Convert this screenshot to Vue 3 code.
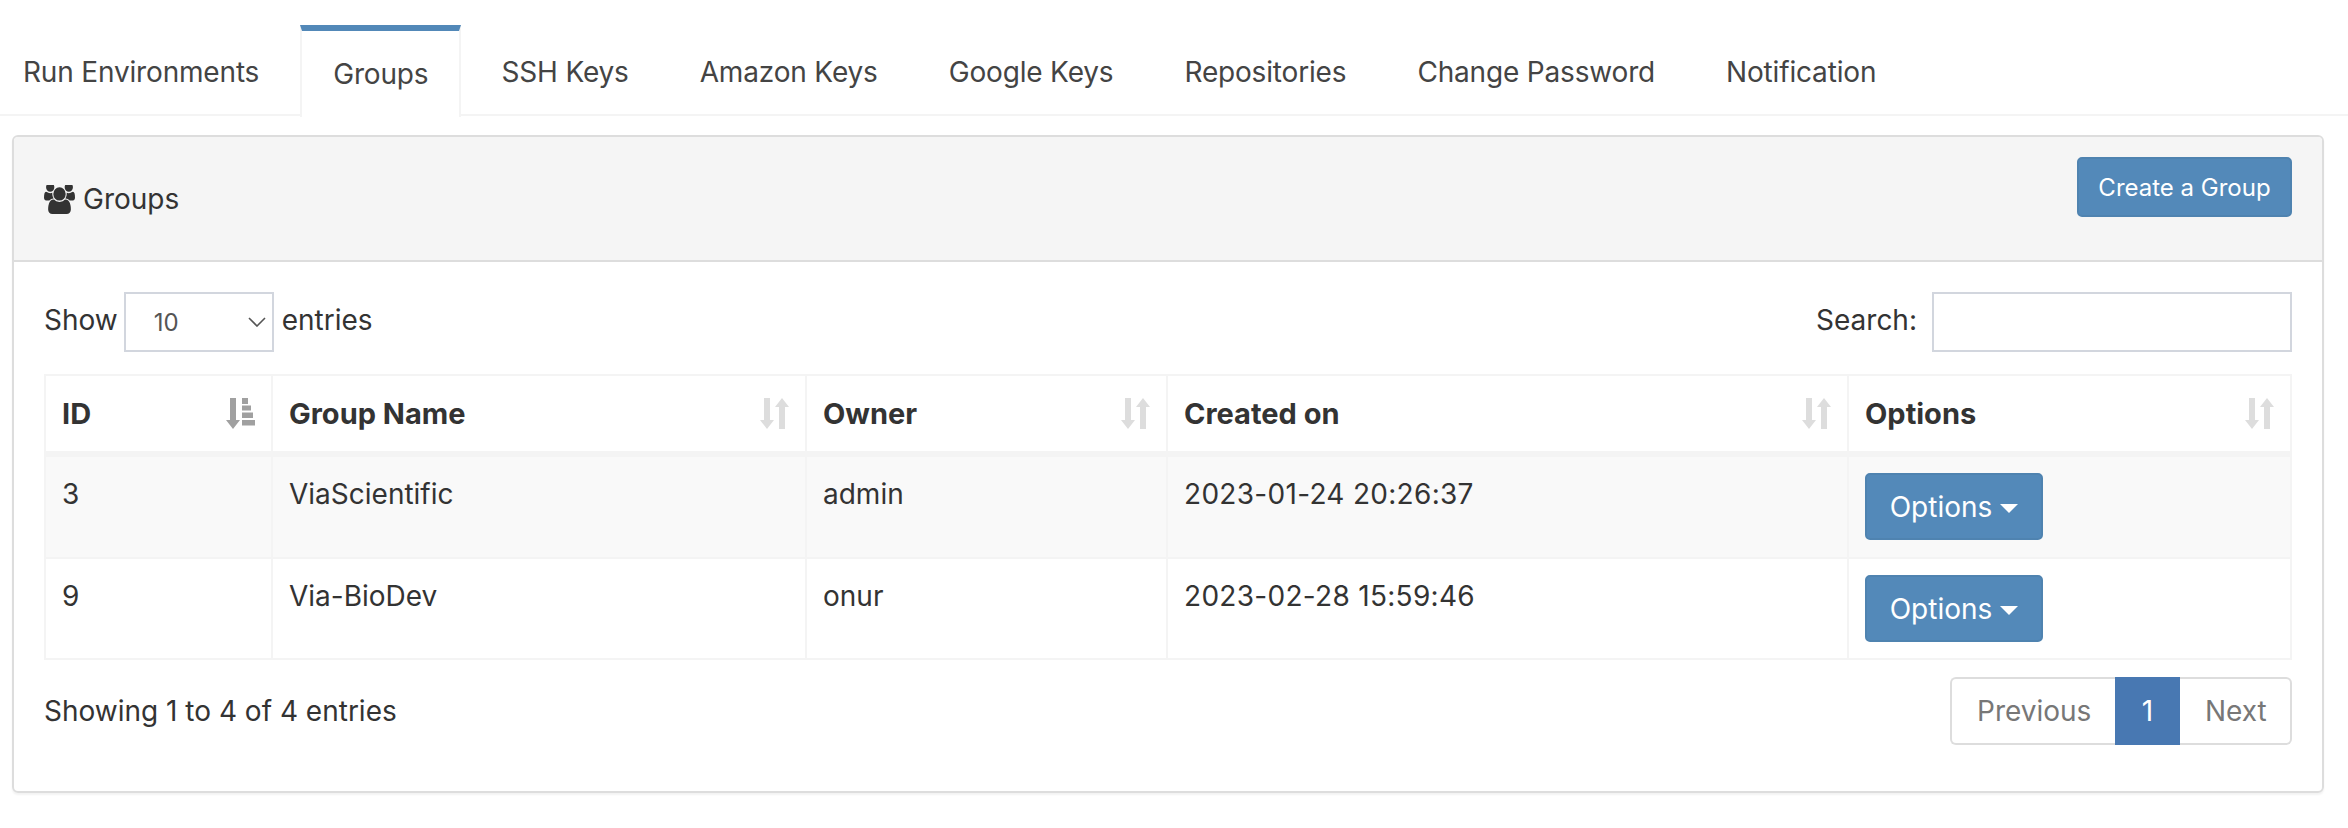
<template>
  <div class="page">
    <ul class="tabs">
      <li v-for="tab in tabs" :key="tab" class="tab" :class="{ active: tab === 'Groups' }">{{ tab }}</li>
    </ul>

    <section class="panel">
      <header class="panel-heading">
        <h3 class="panel-title">
          <svg class="users-icon" viewBox="0 128 1920 1664" preserveAspectRatio="none">
            <path fill="currentColor" d="M593 896q-162 5-265 128h-134q-82 0-138-40.500t-56-118.500q0-353 124-353 6 0 43.500 21t97.500 42.500 119 21.500q67 0 133-23-5 37-5 66 0 139 81 256zm1071 637q0 120-73 189.500t-194 69.500h-874q-121 0-194-69.500t-73-189.500q0-53 3.500-103.500t14-109 26.500-108.500 43-97.500 62-81 85.500-53.500 111.500-20q10 0 43 21.500t73 48 107 48 135 21.500 135-21.500 107-48 73-48 43-21.500q61 0 111.500 20t85.500 53.500 62 81 43 97.500 26.500 108.500 14 109 3.500 103.500zm-1024-1277q0 106-75 181t-181 75-181-75-75-181 75-181 181-75 181 75 75 181zm704 384q0 159-112.500 271.500t-271.500 112.500-271.500-112.500-112.500-271.500 112.500-271.500 271.500-112.500 271.500 112.500 112.500 271.500zm576 225q0 78-56 118.500t-138 40.500h-134q-103-123-265-128 81-117 81-256 0-29-5-66 66 23 133 23 59 0 119-21.500t97.500-42.500 43.500-21q124 0 124 353zm-128-609q0 106-75 181t-181 75-181-75-75-181 75-181 181-75 181 75 75 181z" />
          </svg>
          <span>Groups</span>
        </h3>
        <button class="btn create-btn">Create a Group</button>
      </header>

      <div class="panel-body">
        <div class="table-controls">
          <label class="length">
            Show
            <span class="select-wrap">
              <select class="length-select">
                <option>10</option>
              </select>
              <svg class="chevron" viewBox="0 0 18 10"><path d="M1 1l8 8 8-8" fill="none" stroke="#555" stroke-width="1.6" /></svg>
            </span>
            entries
          </label>
          <label class="search">
            Search:
            <input class="search-input" type="text" />
          </label>
        </div>

        <table class="groups-table">
          <thead>
            <tr>
              <th v-for="(col, i) in columns" :key="col">
                <div class="th-inner">
                  <span>{{ col }}</span>
                  <svg v-if="i === 0" class="sort-icon sorted" viewBox="0 0 29 31">
                    <path fill="currentColor" d="M4 0h6v22h4l-7 9-7-9h4zM16 0h6v6h-6zM16 7.500h9v5h-9zM16 14.500h11v5.500h-11zM16 22h13v5.500h-13z" />
                  </svg>
                  <svg v-else class="sort-icon" viewBox="0 0 29 31">
                    <path fill="currentColor" d="M4 0h6v22h4l-7 9-7-9h4zM22 0l7 9h-4v22h-6v-22h-4z" />
                  </svg>
                </div>
              </th>
            </tr>
          </thead>
          <tbody>
            <tr v-for="row in rows" :key="row.id">
              <td>{{ row.id }}</td>
              <td>{{ row.name }}</td>
              <td>{{ row.owner }}</td>
              <td class="date-cell">{{ row.created }}</td>
              <td>
                <button class="btn options-btn">Options<span class="caret"></span></button>
              </td>
            </tr>
          </tbody>
        </table>

        <div class="table-footer">
          <div class="info">Showing 1 to 4 of 4 entries</div>
          <ul class="pagination">
            <li class="page-item">Previous</li>
            <li class="page-item current">1</li>
            <li class="page-item">Next</li>
          </ul>
        </div>
      </div>
    </section>
  </div>
</template>

<script setup>
const tabs = ['Run Environments', 'Groups', 'SSH Keys', 'Amazon Keys', 'Google Keys', 'Repositories', 'Change Password', 'Notification']
const columns = ['ID', 'Group Name', 'Owner', 'Created on', 'Options']
const rows = [
  { id: 3, name: 'ViaScientific', owner: 'admin', created: '2023-01-24 20:26:37' },
  { id: 9, name: 'Via-BioDev', owner: 'onur', created: '2023-02-28 15:59:46' }
]
</script>

<style>
body {
  background: #fff;
}
</style>

<style scoped>
.page {
  font-family: Inter, "Liberation Sans", sans-serif;
  font-size: 28px;
  color: #333;
  width: 2348px;
  height: 828px;
  overflow: hidden;
  box-sizing: border-box;
  padding-top: 25px;
}

.tabs {
  list-style: none;
  margin: 0;
  padding: 0;
  height: 89px;
  display: flex;
  gap: 9px;
  border-bottom: 2px solid #f4f4f4;
}

.tab {
  padding: 0 31px;
  line-height: 94px;
  color: #444;
  letter-spacing: -0.17px;
}
.tab:first-child {
  padding-left: 23px;
  padding-right: 32px;
}
.tab.active {
  height: 86px;
  background: #fff;
  border-top: 6px solid #5288b8;
  border-left: 2px solid #f4f4f4;
  border-right: 2px solid #f4f4f4;
  line-height: 86px;
}

.panel {
  margin: 19px 24px 0 12px;
  height: 658px;
  box-sizing: border-box;
  border: 2px solid #ddd;
  border-radius: 6px;
  box-shadow: 0 2px 2px rgba(0, 0, 0, 0.05);
}

.panel-heading {
  box-sizing: border-box;
  height: 125px;
  display: flex;
  justify-content: space-between;
  align-items: flex-start;
  padding: 20px 30px 0;
  background: #f5f5f5;
  border-bottom: 2px solid #ddd;
  border-radius: 4px 4px 0 0;
}

.panel-title {
  margin: 22px 0 0;
  display: flex;
  align-items: center;
  gap: 8px;
  font-size: 28px;
  font-weight: 400;
  line-height: 40px;
}

.users-icon {
  width: 31px;
  height: 29px;
}

.btn {
  border: 2px solid #4f83b0;
  border-radius: 5px;
  background: #5389b9;
  color: #fff;
  font-family: inherit;
  cursor: pointer;
}

.create-btn {
  width: 215px;
  height: 60px;
  font-size: 24px;
  padding: 0;
}

.panel-body {
  padding: 30px 30px 0;
}

.table-controls {
  display: flex;
  justify-content: space-between;
  align-items: flex-start;
  height: 60px;
  margin-bottom: 22px;
}

.length,
.search {
  display: flex;
  align-items: flex-start;
  gap: 8px;
  line-height: 57px;
}

.select-wrap {
  position: relative;
  display: block;
  margin-left: -2px;
}

.length-select {
  display: block;
  appearance: none;
  width: 150px;
  height: 60px;
  padding: 0 0 0 28px;
  border: 2px solid #d2d6de;
  background: #fff;
  font-family: inherit;
  font-size: 24px;
  color: #555;
  border-radius: 0;
}

.chevron {
  position: absolute;
  right: 8px;
  top: 25px;
  width: 18px;
  height: 10px;
}

.search {
  gap: 15px;
}

.search-input {
  box-sizing: border-box;
  width: 360px;
  height: 60px;
  border: 2px solid #d2d6de;
  background: #fff;
  padding: 0 12px;
}

.groups-table {
  width: 2248px;
  table-layout: fixed;
  border-collapse: separate;
  border-spacing: 0;
  border-top: 2px solid #f4f4f4;
  border-left: 2px solid #f4f4f4;
}

.groups-table th,
.groups-table td {
  box-sizing: border-box;
  border-right: 2px solid #f4f4f4;
  border-bottom: 2px solid #f4f4f4;
  padding: 16px 16px 0;
  text-align: left;
  vertical-align: top;
  line-height: 43px;
}

.groups-table th:nth-child(1) { width: 227px; }
.groups-table th:nth-child(2) { width: 534px; }
.groups-table th:nth-child(3) { width: 361px; }
.groups-table th:nth-child(4) { width: 681px; }

.groups-table th {
  height: 81px;
  font-size: 29px;
  font-weight: 700;
  border-bottom-width: 6px;
  padding-top: 16px;
}

.groups-table td {
  height: 101px;
}

.groups-table tbody tr:first-child td {
  height: 102px;
}

.groups-table tbody tr:nth-child(odd) {
  background: #f9f9f9;
}

.date-cell {
  letter-spacing: 0.3px;
}

.th-inner {
  display: flex;
  justify-content: space-between;
  align-items: center;
}

.sort-icon {
  width: 29px;
  height: 31px;
  color: #ddd;
}
.sort-icon.sorted {
  color: #a0a0a0;
}

.options-btn {
  display: block;
  width: 178px;
  height: 67px;
  font-size: 28px;
  padding: 0;
}

.caret {
  display: inline-block;
  width: 0;
  height: 0;
  margin-left: 8px;
  vertical-align: middle;
  border-top: 9px solid #fff;
  border-left: 9px solid transparent;
  border-right: 9px solid transparent;
}

.table-footer {
  display: flex;
  justify-content: space-between;
  align-items: center;
  margin-top: 17px;
}

.pagination {
  list-style: none;
  margin: 0;
  padding: 0;
  display: flex;
  height: 68px;
}

.page-item {
  box-sizing: border-box;
  height: 68px;
  line-height: 64px;
  border: 2px solid #ddd;
  color: #777;
  background: #fff;
  padding: 0 25px;
}
.page-item:first-child {
  border-right: 0;
  border-radius: 6px 0 0 6px;
  width: 165px;
}
.page-item:last-child {
  border-left: 0;
  border-radius: 0 6px 6px 0;
  width: 112px;
  padding-right: 0;
}
.page-item.current {
  width: 65px;
  padding: 0;
  text-align: center;
  background: #4878b2;
  border-color: #4878b2;
  color: #fff;
}
</style>
